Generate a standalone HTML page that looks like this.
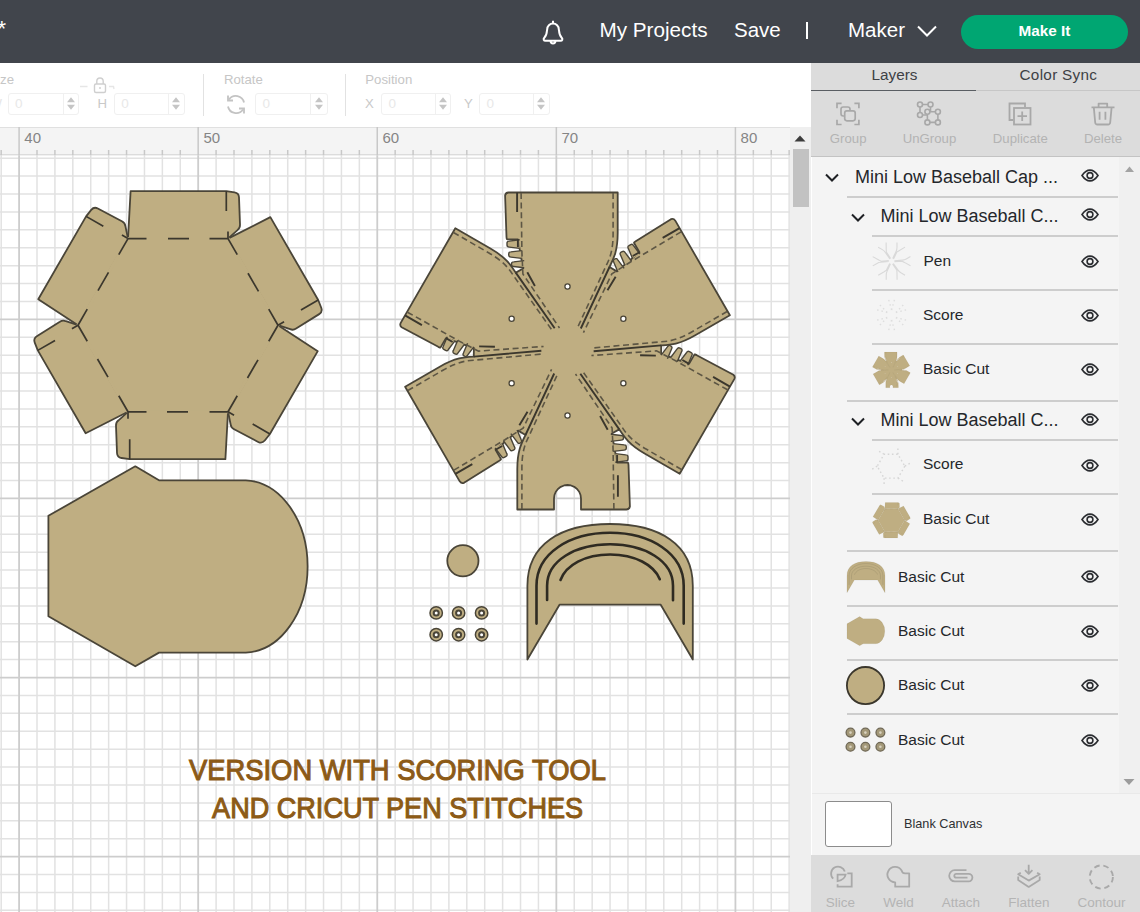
<!DOCTYPE html>
<html><head><meta charset="utf-8">
<style>
*{margin:0;padding:0;box-sizing:border-box}
html,body{width:1140px;height:912px;overflow:hidden;background:#fff;font-family:"Liberation Sans",sans-serif}
.a{position:absolute}
.t{position:absolute;white-space:nowrap;font-family:"Liberation Sans",sans-serif}
</style></head><body>
<svg class="a" style="left:0;top:0" width="790" height="912" viewBox="0 0 790 912" font-family="Liberation Sans, sans-serif">
<path d="M1.19 155V912M37.01 155V912M54.92 155V912M72.82 155V912M90.73 155V912M108.64 155V912M126.55 155V912M144.46 155V912M162.36 155V912M180.27 155V912M216.09 155V912M234 155V912M251.9 155V912M269.81 155V912M287.72 155V912M305.63 155V912M323.54 155V912M341.44 155V912M359.35 155V912M395.17 155V912M413.08 155V912M430.98 155V912M448.89 155V912M466.8 155V912M484.71 155V912M502.62 155V912M520.52 155V912M538.43 155V912M574.25 155V912M592.16 155V912M610.06 155V912M627.97 155V912M645.88 155V912M663.79 155V912M681.7 155V912M699.6 155V912M717.51 155V912M753.33 155V912M771.24 155V912M789.14 155V912M0 158.2H790M0 176.11H790M0 194.02H790M0 211.92H790M0 229.83H790M0 247.74H790M0 265.65H790M0 283.56H790M0 301.46H790M0 337.28H790M0 355.19H790M0 373.1H790M0 391H790M0 408.91H790M0 426.82H790M0 444.73H790M0 462.64H790M0 480.54H790M0 516.36H790M0 534.27H790M0 552.18H790M0 570.08H790M0 587.99H790M0 605.9H790M0 623.81H790M0 641.72H790M0 659.62H790M0 695.44H790M0 713.35H790M0 731.26H790M0 749.16H790M0 767.07H790M0 784.98H790M0 802.89H790M0 820.8H790M0 838.7H790M0 874.52H790M0 892.43H790M0 910.34H790" stroke="#e2e2e2" stroke-width="1.5" fill="none"/>
<path d="M19.1 155V912M198.18 155V912M377.26 155V912M556.34 155V912M735.42 155V912M0 319.37H790M0 498.45H790M0 677.53H790M0 856.61H790" stroke="#cdcdcd" stroke-width="1.8" fill="none"/>
<rect x="0" y="127" width="790" height="28" fill="#f4f4f4"/>
<rect x="0" y="125.5" width="790" height="2" fill="#cbcbcb"/>
<rect x="0" y="154" width="790" height="1.4" fill="#dcdcdc"/>
<path d="M1.19 150V155M19.1 127V155M37.01 150V155M54.92 150V155M72.82 150V155M90.73 150V155M108.64 150V155M126.55 150V155M144.46 150V155M162.36 150V155M180.27 150V155M198.18 127V155M216.09 150V155M234 150V155M251.9 150V155M269.81 150V155M287.72 150V155M305.63 150V155M323.54 150V155M341.44 150V155M359.35 150V155M377.26 127V155M395.17 150V155M413.08 150V155M430.98 150V155M448.89 150V155M466.8 150V155M484.71 150V155M502.62 150V155M520.52 150V155M538.43 150V155M556.34 127V155M574.25 150V155M592.16 150V155M610.06 150V155M627.97 150V155M645.88 150V155M663.79 150V155M681.7 150V155M699.6 150V155M717.51 150V155M735.42 127V155M753.33 150V155M771.24 150V155M789.14 150V155" stroke="#c8c8c8" stroke-width="1.5"/>
<text x="24.3" y="142.7" font-size="15" fill="#858585">40</text>
<text x="203.38" y="142.7" font-size="15" fill="#858585">50</text>
<text x="382.46" y="142.7" font-size="15" fill="#858585">60</text>
<text x="561.54" y="142.7" font-size="15" fill="#858585">70</text>
<text x="740.62" y="142.7" font-size="15" fill="#858585">80</text>
<g fill="#bfae82" stroke="#4a4538" stroke-width="1.8" stroke-linejoin="round">
<path d="M128 238.6L130.6 191.2L226.3 191.2L234.5 192.4Q238.8 193.1 239 197.4L240 224.6Q240.2 228.1 237.5 230.1L228 238.6Z"/>
<path d="M228 238.6L270.35 217.15L318.2 300.03L321.26 307.73Q322.8 311.8 319.18 314.13L296.12 328.59Q293.19 330.52 290.11 329.18L278 325.2Z"/>
<path d="M278 325.2L317.75 351.15L269.9 434.03L264.76 440.53Q262 443.91 258.18 441.93L234.12 429.19Q230.99 427.62 230.61 424.28L228 411.8Z"/>
<path d="M228 411.8L225.4 459.2L129.7 459.2L121.5 458Q117.2 457.3 117 453L116 425.8Q115.8 422.3 118.5 420.3L128 411.8Z"/>
<path d="M128 411.8L85.65 433.25L37.8 350.37L34.74 342.67Q33.2 338.6 36.82 336.27L59.88 321.81Q62.81 319.88 65.89 321.22L78 325.2Z"/>
<path d="M78 325.2L38.25 299.25L86.1 216.37L91.24 209.87Q94 206.49 97.82 208.47L121.88 221.21Q125.01 222.78 125.39 226.12L128 238.6Z"/>
</g>
<path d="M128 238.6L228 238.6L278 325.2L228 411.8L128 411.8L78 325.2Z" fill="#bfae82" stroke="#bfae82" stroke-width="3" stroke-linejoin="round"/>
<path d="M128 238.6L146.5 238.6M168 238.6L189 238.6M209.5 238.6L228 238.6M226.3 191.2L226.3 211.1M228 238.6L228 231.6M228 238.6L237.25 254.62M248 273.24L258.5 291.43M268.75 309.18L278 325.2M318.2 300.03L300.97 309.98M278 325.2L284.06 321.7M278 325.2L268.75 341.22M258 359.84L247.5 378.03M237.25 395.78L228 411.8M269.9 434.03L252.67 424.08M228 411.8L234.06 415.3M228 411.8L209.5 411.8M188 411.8L167 411.8M146.5 411.8L128 411.8M129.7 459.2L129.7 439.3M128 411.8L128 418.8M128 411.8L118.75 395.78M108 377.16L97.5 358.97M87.25 341.22L78 325.2M37.8 350.37L55.03 340.42M78 325.2L71.94 328.7M78 325.2L87.25 309.18M98 290.56L108.5 272.37M118.75 254.62L128 238.6M86.1 216.37L103.33 226.32M128 238.6L121.94 235.1" stroke="#3b372d" stroke-width="1.7" fill="none"/>
<path d="M48.4 515.8L135.3 466.3L159 480.3L245.8 480.3A64 86.2 0 0 1 245.8 652.6L159 652.6L135.3 666.3L48.4 616.3Z" fill="#bfae82" stroke="#4a4538" stroke-width="1.8" stroke-linejoin="round"/>
<circle cx="462.9" cy="560.8" r="15.6" fill="#bfae82" stroke="#4a4538" stroke-width="1.8"/>
<circle cx="436.2" cy="612.9" r="6.2" fill="#bfae82" stroke="#4a4538" stroke-width="1.5"/><circle cx="436.2" cy="612.9" r="2.5" fill="#fff" stroke="#4a4538" stroke-width="2"/>
<circle cx="436.2" cy="634.7" r="6.2" fill="#bfae82" stroke="#4a4538" stroke-width="1.5"/><circle cx="436.2" cy="634.7" r="2.5" fill="#fff" stroke="#4a4538" stroke-width="2"/>
<circle cx="458.6" cy="612.9" r="6.2" fill="#bfae82" stroke="#4a4538" stroke-width="1.5"/><circle cx="458.6" cy="612.9" r="2.5" fill="#fff" stroke="#4a4538" stroke-width="2"/>
<circle cx="458.6" cy="634.7" r="6.2" fill="#bfae82" stroke="#4a4538" stroke-width="1.5"/><circle cx="458.6" cy="634.7" r="2.5" fill="#fff" stroke="#4a4538" stroke-width="2"/>
<circle cx="481.6" cy="612.9" r="6.2" fill="#bfae82" stroke="#4a4538" stroke-width="1.5"/><circle cx="481.6" cy="612.9" r="2.5" fill="#fff" stroke="#4a4538" stroke-width="2"/>
<circle cx="481.6" cy="634.7" r="6.2" fill="#bfae82" stroke="#4a4538" stroke-width="1.5"/><circle cx="481.6" cy="634.7" r="2.5" fill="#fff" stroke="#4a4538" stroke-width="2"/>
<path d="M527.4 659.5L527.4 585.7C527.4 544 561 524 610.1 524C659 524 692.8 544 692.8 585.7L692.8 659.5L660.7 604.7L559.5 604.7Z" fill="#bfae82" stroke="#4a4538" stroke-width="1.8" stroke-linejoin="round"/>
<path d="M536.5 623.6L536.5 585.7C536.5 553 570 532.8 610.1 532.8C650 532.8 683.7 553 683.7 585.7L683.7 623.6M547.1 600L547.1 585.7C547.1 561 575 544.3 610.1 544.3C645 544.3 673 561 673 585.7L673 600.3M560.5 580C566 565 585 554.5 610.1 554.5C635 554.5 654 565 659.8 579.2" stroke="#2f2b22" stroke-width="2.6" fill="none" stroke-linecap="round"/>
<path d="M515.8 272.6L523.2 268.5L517.9 239.3L507.2 239.3Q506.7 239.5 506.5 237L505.1 195.5Q505.5 192.7 508.5 192.5L617.7 192.5L617.7 233C617.7 251 613.5 259 609.5 267L616.8 271.39L639.44 252.2L634.09 242.93Q633.66 242.6 635.73 241.17L670.97 219.21Q673.59 218.16 675.27 220.65L729.87 315.22L694.79 335.47C679.2 344.47 670.17 344.84 661.25 345.37L661.1 353.89L689.04 363.9L694.39 354.63Q694.46 354.1 696.73 355.17L733.37 374.71Q735.59 376.46 734.27 379.15L679.67 473.72L644.59 453.47C629 444.47 624.17 436.84 619.25 429.37L611.8 433.5L617.1 462.7L627.8 462.7Q628.3 462.5 628.5 465L629.9 506.5Q629.5 509.3 626.5 509.5L581 509.5L581 498.5L580.54 495.01L579.19 491.75L577.05 488.95L574.25 486.81L570.99 485.46L567.5 485L564.01 485.46L560.75 486.81L557.95 488.95L555.81 491.75L554.46 495.01L554 498.5L554 509.5L517.3 509.5L517.3 469C517.3 451 521.5 443 525.5 435L518.2 430.61L495.56 449.8L500.91 459.07Q501.34 459.4 499.27 460.83L464.03 482.79Q461.41 483.84 459.73 481.35L405.13 386.78L440.21 366.53C455.8 357.53 464.83 357.16 473.75 356.63L473.9 348.11L445.96 338.1L440.61 347.37Q440.54 347.9 438.27 346.83L401.63 327.29Q399.41 325.54 400.73 322.85L455.33 228.28L490.41 248.53C506 257.53 510.83 265.16 515.75 272.63Z" fill="#bfae82" stroke="#4a4538" stroke-width="1.8" stroke-linejoin="round"/>
<path d="M519.7 239.8L509.2 241.1Q507 241.1 507 243.1L507 245.1Q507 247.1 509.2 247.1L519.7 248.4M521.8 250.6L510.9 251.9Q508.7 251.9 508.7 253.9L508.7 255.1Q508.7 257.1 510.9 257.1L521.8 258.4M524.2 260.6L513.7 261.9Q511.5 261.9 511.5 263.9L511.5 264.5Q511.5 266.5 513.7 266.5L524.2 267.8M639.9 254L633.53 245.56Q632.43 243.66 630.69 244.66L628.96 245.66Q627.23 246.66 628.33 248.56L632.45 258.3M631.6 261.22L625.02 252.43Q623.92 250.53 622.19 251.53L621.15 252.13Q619.42 253.13 620.52 255.03L624.84 265.12M624.14 268.3L617.76 259.86Q616.66 257.95 614.93 258.95L614.41 259.25Q612.68 260.25 613.78 262.16L617.9 271.9M687.7 365.2L691.83 355.46Q692.93 353.56 691.19 352.56L689.46 351.56Q687.73 350.56 686.63 352.46L680.25 360.9M677.3 361.62L681.62 351.53Q682.72 349.63 680.99 348.63L679.95 348.03Q678.22 347.03 677.12 348.93L670.54 357.72M667.44 358.7L671.56 348.96Q672.66 347.05 670.93 346.05L670.41 345.75Q668.68 344.75 667.58 346.66L661.2 355.1M615.3 462.2L625.8 460.9Q628 460.9 628 458.9L628 456.9Q628 454.9 625.8 454.9L615.3 453.6M613.2 451.4L624.1 450.1Q626.3 450.1 626.3 448.1L626.3 446.9Q626.3 444.9 624.1 444.9L613.2 443.6M610.8 441.4L621.3 440.1Q623.5 440.1 623.5 438.1L623.5 437.5Q623.5 435.5 621.3 435.5L610.8 434.2M495.1 448L501.47 456.44Q502.57 458.34 504.31 457.34L506.04 456.34Q507.77 455.34 506.67 453.44L502.55 443.7M503.4 440.78L509.98 449.57Q511.08 451.47 512.81 450.47L513.85 449.87Q515.58 448.87 514.48 446.97L510.16 436.88M510.86 433.7L517.24 442.14Q518.34 444.05 520.07 443.05L520.59 442.75Q522.32 441.75 521.22 439.84L517.1 430.1M447.3 336.8L443.17 346.54Q442.07 348.44 443.81 349.44L445.54 350.44Q447.27 351.44 448.37 349.54L454.75 341.1M457.7 340.38L453.38 350.47Q452.28 352.37 454.01 353.37L455.05 353.97Q456.78 354.97 457.88 353.07L464.46 344.28M467.56 343.3L463.44 353.04Q462.34 354.95 464.07 355.95L464.59 356.25Q466.32 357.25 467.42 355.34L473.8 346.9" fill="#bfae82" stroke="#4a4538" stroke-width="1.4" stroke-linejoin="round"/>
<path d="M580.8 328.5L609.5 267M527.3 272.2L534.9 286M517.1 192.5L517.1 212M517.9 247L517.9 239.3M593.64 351.27L661.25 345.37M615.64 276.79L607.49 290.27M679.57 228.1L662.68 237.85M632.77 256.05L639.44 252.2M580.34 373.77L619.25 429.37M655.84 355.59L640.09 355.27M729.97 386.6L713.08 376.85M682.37 360.05L689.04 363.9M554.2 373.5L525.5 435M607.7 429.8L600.1 416M617.9 496.7L617.9 475.3M617.1 455L617.1 462.7M541.36 350.73L473.75 356.63M519.36 425.21L527.51 411.73M455.43 473.9L472.32 464.15M502.23 445.95L495.56 449.8M554.66 328.23L515.75 272.63M479.16 346.41L494.91 346.73M405.03 315.4L421.92 325.15M452.63 341.95L445.96 338.1" stroke="#3b372d" stroke-width="1.9" fill="none"/>
<path d="M613.1 193L613.1 234C613.1 251 609.5 259 606.1 265.8L576.9 329M521.1 193L521.9 252L522.9 274L559.5 328M727.13 311.49L691.62 331.99C676.9 340.49 668.17 341.37 660.59 341.83L591.25 348.14M681.13 231.82L630.44 262.01L611.88 273.88L583.42 332.57M681.53 469.49L646.02 448.99C631.3 440.49 626.17 433.37 621.99 427.03L581.85 370.14M727.53 389.82L676.04 361.01L656.48 350.88L591.42 355.57M521.9 509L521.9 468C521.9 451 525.5 443 528.9 436.2L558.1 373M613.9 509L613.1 450L612.1 428L575.5 374M407.87 390.51L443.38 370.01C458.1 361.51 466.83 360.63 474.41 360.17L543.75 353.86M453.87 470.18L504.56 439.99L523.12 428.12L551.58 369.43M453.47 232.51L488.98 253.01C503.7 261.51 508.83 268.63 513.01 274.97L553.15 331.86M407.47 312.18L458.96 340.99L478.52 351.12L543.58 346.43" stroke="#5d5644" stroke-width="1.6" stroke-dasharray="6 3.6" fill="none"/>
<circle cx="567.5" cy="286.5" r="2.6" fill="#fff" stroke="#4a4538" stroke-width="1.3"/>
<circle cx="623.36" cy="318.75" r="2.6" fill="#fff" stroke="#4a4538" stroke-width="1.3"/>
<circle cx="623.36" cy="383.25" r="2.6" fill="#fff" stroke="#4a4538" stroke-width="1.3"/>
<circle cx="567.5" cy="415.5" r="2.6" fill="#fff" stroke="#4a4538" stroke-width="1.3"/>
<circle cx="511.64" cy="383.25" r="2.6" fill="#fff" stroke="#4a4538" stroke-width="1.3"/>
<circle cx="511.64" cy="318.75" r="2.6" fill="#fff" stroke="#4a4538" stroke-width="1.3"/>
<text x="397.5" y="779.7" text-anchor="middle" font-size="29.2" fill="#8c5a16" stroke="#8c5a16" stroke-width="1.05" textLength="417" lengthAdjust="spacingAndGlyphs">VERSION WITH SCORING TOOL</text>
<text x="397.6" y="818.3" text-anchor="middle" font-size="29.2" fill="#8c5a16" stroke="#8c5a16" stroke-width="1.05" textLength="371" lengthAdjust="spacingAndGlyphs">AND CRICUT PEN STITCHES</text>
</svg>
<div class="a" style="left:0;top:63px;width:811px;height:63.5px;background:#fff"></div>
<div class="t" style="left:-11.7px;top:73.3px;font-size:13.2px;line-height:1;color:#c6c6c6">Size</div>
<div class="t" style="left:224px;top:73.3px;font-size:13.2px;line-height:1;color:#c6c6c6">Rotate</div>
<div class="t" style="left:365.3px;top:73.3px;font-size:13.2px;line-height:1;color:#c6c6c6">Position</div>
<div class="t" style="left:97.5px;top:96.8px;font-size:13.2px;line-height:1;color:#c9c9c9">H</div>
<div class="t" style="left:365px;top:96.8px;font-size:13.2px;line-height:1;color:#c9c9c9">X</div>
<div class="t" style="left:464px;top:96.8px;font-size:13.2px;line-height:1;color:#c9c9c9">Y</div>
<div class="t" style="left:-10.5px;top:96.8px;font-size:13.2px;line-height:1;color:#e6e6e6">W</div>
<div class="a" style="left:7.5px;top:92.5px;width:71.3px;height:22px;border:1.2px solid #f0f0f0;border-radius:3px;background:#fff"></div>
<div class="a" style="left:62.5px;top:93.5px;width:1.2px;height:20px;background:#f0f0f0"></div>
<div class="t" style="left:15.0px;top:96.5px;font-size:13.5px;line-height:1;color:#e8e8e8">0</div>
<svg class="a" style="left:65.65px;top:96px" width="10" height="15"><path d="M1 6.2L5 1.2L9 6.2Z M1 8.8L5 13.8L9 8.8Z" fill="#c5c5c5"/></svg>
<div class="a" style="left:113.8px;top:92.5px;width:71.2px;height:22px;border:1.2px solid #f0f0f0;border-radius:3px;background:#fff"></div>
<div class="a" style="left:167.5px;top:93.5px;width:1.2px;height:20px;background:#f0f0f0"></div>
<div class="t" style="left:121.3px;top:96.5px;font-size:13.5px;line-height:1;color:#e8e8e8">0</div>
<svg class="a" style="left:171.25px;top:96px" width="10" height="15"><path d="M1 6.2L5 1.2L9 6.2Z M1 8.8L5 13.8L9 8.8Z" fill="#c5c5c5"/></svg>
<div class="a" style="left:255px;top:92.5px;width:73px;height:22px;border:1.2px solid #f0f0f0;border-radius:3px;background:#fff"></div>
<div class="a" style="left:309.5px;top:93.5px;width:1.2px;height:20px;background:#f0f0f0"></div>
<div class="t" style="left:262.5px;top:96.5px;font-size:13.5px;line-height:1;color:#e8e8e8">0</div>
<svg class="a" style="left:313.75px;top:96px" width="10" height="15"><path d="M1 6.2L5 1.2L9 6.2Z M1 8.8L5 13.8L9 8.8Z" fill="#c5c5c5"/></svg>
<div class="a" style="left:381px;top:92.5px;width:70.39999999999998px;height:22px;border:1.2px solid #f0f0f0;border-radius:3px;background:#fff"></div>
<div class="a" style="left:434.5px;top:93.5px;width:1.2px;height:20px;background:#f0f0f0"></div>
<div class="t" style="left:388.5px;top:96.5px;font-size:13.5px;line-height:1;color:#e8e8e8">0</div>
<svg class="a" style="left:437.95px;top:96px" width="10" height="15"><path d="M1 6.2L5 1.2L9 6.2Z M1 8.8L5 13.8L9 8.8Z" fill="#c5c5c5"/></svg>
<div class="a" style="left:479px;top:92.5px;width:70.70000000000005px;height:22px;border:1.2px solid #f0f0f0;border-radius:3px;background:#fff"></div>
<div class="a" style="left:533px;top:93.5px;width:1.2px;height:20px;background:#f0f0f0"></div>
<div class="t" style="left:486.5px;top:96.5px;font-size:13.5px;line-height:1;color:#e8e8e8">0</div>
<svg class="a" style="left:536.35px;top:96px" width="10" height="15"><path d="M1 6.2L5 1.2L9 6.2Z M1 8.8L5 13.8L9 8.8Z" fill="#c5c5c5"/></svg>
<div class="a" style="left:203.2px;top:74px;width:1.3px;height:42px;background:#e2e2e2"></div>
<div class="a" style="left:344.8px;top:74px;width:1.3px;height:42px;background:#e2e2e2"></div>
<svg class="a" style="left:78px;top:75px" width="40" height="20" fill="none" stroke="#cfcfcf" stroke-width="1.4"><path d="M2 11.5H9.5M31 11.5H35.5L36 14" stroke="#e6e6e6"/><rect x="16.5" y="9" width="11" height="8.5" rx="1.5"/><path d="M18.8 9V6.2A3.2 3.2 0 0 1 25.2 6.2V9"/><path d="M22 12V14"/></svg>
<svg class="a" style="left:224px;top:93px" width="23" height="23" fill="none" stroke="#c3c3c3" stroke-width="1.8"><g transform="translate(23.5 0) scale(-1 1)"><path d="M3.5 9.5A8.3 8.3 0 0 1 18.5 6.5"/><path d="M19.5 2.5V7.5H14.5"/><path d="M19.5 13.5A8.3 8.3 0 0 1 4.5 16.5"/><path d="M3.5 20.5V15.5H8.5"/></g></svg>
<div class="a" style="left:789.6px;top:127px;width:21.8px;height:785px;background:#efefef"></div>
<svg class="a" style="left:793px;top:133px" width="14" height="10"><path d="M1.5 8.5L7 2.5L12.5 8.5Z" fill="#3c3c3c"/></svg>
<div class="a" style="left:792.5px;top:149px;width:16.5px;height:58px;background:#c2c2c2"></div>
<div class="a" style="left:0;top:0;width:1140px;height:63px;background:#41454c"></div>
<div class="t" style="left:-2.5px;top:18.4px;font-size:22px;line-height:1;color:#ffffff;">*</div>
<div class="t" style="left:599.5px;top:19.9px;font-size:20.7px;line-height:1;color:#ffffff;">My Projects</div>
<div class="t" style="left:734px;top:20.0px;font-size:20.5px;line-height:1;color:#ffffff;">Save</div>
<div class="a" style="left:805.5px;top:22px;width:2px;height:17px;background:#fff"></div>
<div class="t" style="left:848px;top:20.0px;font-size:20.5px;line-height:1;color:#ffffff;">Maker</div>
<svg class="a" style="left:916px;top:24px" width="22" height="14" fill="none" stroke="#fff" stroke-width="2"><path d="M2 2.5L11 11.5L20 2.5"/></svg>
<svg class="a" style="left:538px;top:17px" width="30" height="30" fill="none" stroke="#fff" stroke-width="2" stroke-linejoin="round"><path d="M15 3.8V6.5M6.3 20.8C8.3 18.8 8.8 16.5 9 13.5L9.2 12.3A5.8 5.8 0 0 1 20.8 12.3L21 13.5C21.2 16.5 21.7 18.8 23.7 20.8C25 22.2 24.3 23.8 22.5 23.8H7.5C5.7 23.8 5 22.2 6.3 20.8Z"/><path d="M12.6 24A2.4 2.4 0 0 0 17.4 24"/></svg>
<div class="a" style="left:961px;top:15px;width:167px;height:34px;border-radius:17px;background:#00a672"></div>
<div class="t" style="left:1018.5px;top:22.6px;font-size:15.3px;line-height:1;color:#ffffff;font-weight:bold">Make It</div>
<div class="a" style="left:811.5px;top:63px;width:328.5px;height:849px;background:#f4f4f4"></div>
<div class="a" style="left:811px;top:63px;width:329px;height:93px;background:#dcdcdc"></div>
<div class="a" style="left:811px;top:89.5px;width:165px;height:1.6px;background:#5a5e63"></div>
<div class="a" style="left:976px;top:89.5px;width:164px;height:1px;background:#c7c7c7"></div>
<div class="a" style="left:811px;top:155.5px;width:329px;height:1.6px;background:#c3c3c3"></div>
<div class="t" style="left:871.5px;top:66px;font-size:15.3px;color:#3e4145">Layers</div>
<div class="t" style="left:1019.5px;top:66px;font-size:15.3px;color:#3e4145;letter-spacing:0.3px">Color Sync</div>
<div class="t" style="left:848.2px;top:131px;width:100px;margin-left:-50px;text-align:center;font-size:13.2px;color:#b3b3b3">Group</div>
<div class="t" style="left:929.5px;top:131px;width:100px;margin-left:-50px;text-align:center;font-size:13.2px;color:#b3b3b3">UnGroup</div>
<div class="t" style="left:1020.3px;top:131px;width:100px;margin-left:-50px;text-align:center;font-size:13.2px;color:#b3b3b3">Duplicate</div>
<div class="t" style="left:1103px;top:131px;width:100px;margin-left:-50px;text-align:center;font-size:13.2px;color:#b3b3b3">Delete</div>
<svg class="a" style="left:836px;top:102px" width="24" height="24" fill="none" stroke="#a8a8a8" stroke-width="1.7"><path d="M1 6.2V1.4H5.6M18.4 1.4H22.9V6.2M22.9 17.8V22.5H18.4M5.6 22.5H1V17.8"/><rect x="5" y="5" width="9" height="9" rx="2.2"/><rect x="8.7" y="8.8" width="10.5" height="10" rx="2.2" fill="#dcdcdc"/></svg>
<svg class="a" style="left:916px;top:100px" width="26" height="26" fill="none" stroke="#a8a8a8" stroke-width="1.6"><path d="M4 4.5H14.5V11M4 4.5V15H11"/><circle cx="4" cy="4.5" r="2.5" fill="#dcdcdc"/><circle cx="14.5" cy="4.5" r="2.5" fill="#dcdcdc"/><circle cx="4" cy="15" r="2.5" fill="#dcdcdc"/><path d="M11.4 11.8H21.9V22.4H11.4Z"/><circle cx="11.4" cy="11.8" r="2.5" fill="#dcdcdc"/><circle cx="21.9" cy="11.8" r="2.5" fill="#dcdcdc"/><circle cx="11.4" cy="22.4" r="2.5" fill="#dcdcdc"/><circle cx="21.9" cy="22.4" r="2.5" fill="#dcdcdc"/></svg>
<svg class="a" style="left:1008px;top:102px" width="25" height="24" fill="none" stroke="#a8a8a8" stroke-width="1.8"><path d="M5 18H1.5V1.5H17V5"/><rect x="6" y="6" width="16.5" height="16.5"/><path d="M14.2 9.5V19M9.5 14.2H19"/></svg>
<svg class="a" style="left:1091px;top:101px" width="24" height="25" fill="none" stroke="#a8a8a8" stroke-width="1.8" stroke-linejoin="round"><path d="M0.5 6.4H23.5M7.6 6.4V2.6H16.2V6.4M2.8 6.4L4.2 21.5Q4.4 23.5 6.4 23.5H17Q19 23.5 19.2 21.5L20.6 6.4M8.6 10.8V18.8M14.4 10.8V18.8"/></svg>
<div class="a" style="left:1118.5px;top:157px;width:21.5px;height:636px;background:#f0f0f0"></div>
<svg class="a" style="left:1122px;top:164px" width="14" height="10"><path d="M3 8L7.5 2.6L12 8Z" fill="#a3a3a3"/></svg>
<svg class="a" style="left:1122px;top:777px" width="14" height="10"><path d="M1.5 2L7 8L12.5 2Z" fill="#9c9c9c"/></svg>
<svg class="a" style="left:825px;top:173px" width="14" height="9" fill="none" stroke="#1e2024" stroke-width="2"><path d="M1 1.5L7 7.5L13 1.5"/></svg>
<div class="t" style="left:855px;top:167.8px;font-size:18px;line-height:1;color:#24272b">Mini Low Baseball Cap ...</div>
<svg class="a" style="left:1081px;top:169.0px" width="18" height="13" fill="none" stroke="#2a2c30" stroke-width="1.6"><path d="M1 6.5C3.8 2.4 6.5 1.1 9 1.1S14.2 2.4 17 6.5C14.2 10.6 11.5 11.9 9 11.9S3.8 10.6 1 6.5Z"/><circle cx="9" cy="6.5" r="2.9"/></svg>
<div class="a" style="left:847px;top:196px;width:271px;height:2px;background:#cdcdcd"></div>
<svg class="a" style="left:851px;top:213px" width="14" height="9" fill="none" stroke="#1e2024" stroke-width="2"><path d="M1 1.5L7 7.5L13 1.5"/></svg>
<div class="t" style="left:880.5px;top:206.6px;font-size:18px;line-height:1;color:#24272b">Mini Low Baseball C...</div>
<svg class="a" style="left:1081px;top:207.5px" width="18" height="13" fill="none" stroke="#2a2c30" stroke-width="1.6"><path d="M1 6.5C3.8 2.4 6.5 1.1 9 1.1S14.2 2.4 17 6.5C14.2 10.6 11.5 11.9 9 11.9S3.8 10.6 1 6.5Z"/><circle cx="9" cy="6.5" r="2.9"/></svg>
<div class="a" style="left:872px;top:235px;width:246px;height:2px;background:#cdcdcd"></div>
<div class="t" style="left:923.5px;top:253.2px;font-size:15.5px;line-height:1;color:#24272b">Pen</div>
<svg class="a" style="left:1081px;top:254.5px" width="18" height="13" fill="none" stroke="#2a2c30" stroke-width="1.6"><path d="M1 6.5C3.8 2.4 6.5 1.1 9 1.1S14.2 2.4 17 6.5C14.2 10.6 11.5 11.9 9 11.9S3.8 10.6 1 6.5Z"/><circle cx="9" cy="6.5" r="2.9"/></svg>
<div class="a" style="left:872px;top:289px;width:246px;height:2px;background:#cdcdcd"></div>
<div class="t" style="left:923px;top:307.4px;font-size:15.5px;line-height:1;color:#24272b">Score</div>
<svg class="a" style="left:1081px;top:309.0px" width="18" height="13" fill="none" stroke="#2a2c30" stroke-width="1.6"><path d="M1 6.5C3.8 2.4 6.5 1.1 9 1.1S14.2 2.4 17 6.5C14.2 10.6 11.5 11.9 9 11.9S3.8 10.6 1 6.5Z"/><circle cx="9" cy="6.5" r="2.9"/></svg>
<div class="a" style="left:872px;top:343px;width:246px;height:2px;background:#cdcdcd"></div>
<div class="t" style="left:923px;top:360.9px;font-size:15.5px;line-height:1;color:#24272b">Basic Cut</div>
<svg class="a" style="left:1081px;top:363.0px" width="18" height="13" fill="none" stroke="#2a2c30" stroke-width="1.6"><path d="M1 6.5C3.8 2.4 6.5 1.1 9 1.1S14.2 2.4 17 6.5C14.2 10.6 11.5 11.9 9 11.9S3.8 10.6 1 6.5Z"/><circle cx="9" cy="6.5" r="2.9"/></svg>
<div class="a" style="left:847px;top:400px;width:271px;height:2px;background:#cdcdcd"></div>
<svg class="a" style="left:851px;top:417px" width="14" height="9" fill="none" stroke="#1e2024" stroke-width="2"><path d="M1 1.5L7 7.5L13 1.5"/></svg>
<div class="t" style="left:880.5px;top:410.8px;font-size:18px;line-height:1;color:#24272b">Mini Low Baseball C...</div>
<svg class="a" style="left:1081px;top:412.5px" width="18" height="13" fill="none" stroke="#2a2c30" stroke-width="1.6"><path d="M1 6.5C3.8 2.4 6.5 1.1 9 1.1S14.2 2.4 17 6.5C14.2 10.6 11.5 11.9 9 11.9S3.8 10.6 1 6.5Z"/><circle cx="9" cy="6.5" r="2.9"/></svg>
<div class="a" style="left:872px;top:439px;width:246px;height:2px;background:#cdcdcd"></div>
<div class="t" style="left:923px;top:456.1px;font-size:15.5px;line-height:1;color:#24272b">Score</div>
<svg class="a" style="left:1081px;top:458.5px" width="18" height="13" fill="none" stroke="#2a2c30" stroke-width="1.6"><path d="M1 6.5C3.8 2.4 6.5 1.1 9 1.1S14.2 2.4 17 6.5C14.2 10.6 11.5 11.9 9 11.9S3.8 10.6 1 6.5Z"/><circle cx="9" cy="6.5" r="2.9"/></svg>
<div class="a" style="left:872px;top:493px;width:246px;height:2px;background:#cdcdcd"></div>
<div class="t" style="left:923px;top:511.2px;font-size:15.5px;line-height:1;color:#24272b">Basic Cut</div>
<svg class="a" style="left:1081px;top:513.0px" width="18" height="13" fill="none" stroke="#2a2c30" stroke-width="1.6"><path d="M1 6.5C3.8 2.4 6.5 1.1 9 1.1S14.2 2.4 17 6.5C14.2 10.6 11.5 11.9 9 11.9S3.8 10.6 1 6.5Z"/><circle cx="9" cy="6.5" r="2.9"/></svg>
<div class="a" style="left:847px;top:550px;width:271px;height:2px;background:#cdcdcd"></div>
<div class="t" style="left:898px;top:568.5px;font-size:15.5px;line-height:1;color:#24272b">Basic Cut</div>
<svg class="a" style="left:1081px;top:570.0px" width="18" height="13" fill="none" stroke="#2a2c30" stroke-width="1.6"><path d="M1 6.5C3.8 2.4 6.5 1.1 9 1.1S14.2 2.4 17 6.5C14.2 10.6 11.5 11.9 9 11.9S3.8 10.6 1 6.5Z"/><circle cx="9" cy="6.5" r="2.9"/></svg>
<div class="a" style="left:847px;top:605px;width:271px;height:2px;background:#cdcdcd"></div>
<div class="t" style="left:898px;top:622.9px;font-size:15.5px;line-height:1;color:#24272b">Basic Cut</div>
<svg class="a" style="left:1081px;top:624.5px" width="18" height="13" fill="none" stroke="#2a2c30" stroke-width="1.6"><path d="M1 6.5C3.8 2.4 6.5 1.1 9 1.1S14.2 2.4 17 6.5C14.2 10.6 11.5 11.9 9 11.9S3.8 10.6 1 6.5Z"/><circle cx="9" cy="6.5" r="2.9"/></svg>
<div class="a" style="left:847px;top:659px;width:271px;height:2px;background:#cdcdcd"></div>
<div class="t" style="left:898px;top:677.4px;font-size:15.5px;line-height:1;color:#24272b">Basic Cut</div>
<svg class="a" style="left:1081px;top:679.2px" width="18" height="13" fill="none" stroke="#2a2c30" stroke-width="1.6"><path d="M1 6.5C3.8 2.4 6.5 1.1 9 1.1S14.2 2.4 17 6.5C14.2 10.6 11.5 11.9 9 11.9S3.8 10.6 1 6.5Z"/><circle cx="9" cy="6.5" r="2.9"/></svg>
<div class="a" style="left:847px;top:713px;width:271px;height:2px;background:#cdcdcd"></div>
<div class="t" style="left:898px;top:731.9px;font-size:15.5px;line-height:1;color:#24272b">Basic Cut</div>
<svg class="a" style="left:1081px;top:733.5px" width="18" height="13" fill="none" stroke="#2a2c30" stroke-width="1.6"><path d="M1 6.5C3.8 2.4 6.5 1.1 9 1.1S14.2 2.4 17 6.5C14.2 10.6 11.5 11.9 9 11.9S3.8 10.6 1 6.5Z"/><circle cx="9" cy="6.5" r="2.9"/></svg>
<div class="a" style="left:811.5px;top:793px;width:328.5px;height:62px;background:#f4f4f4;border-top:1px solid #e9e9e9"></div>
<div class="a" style="left:824.5px;top:801px;width:67px;height:46px;background:#fff;border:1.3px solid #8c8c8c;border-radius:3px"></div>
<div class="t" style="left:904px;top:817.7px;font-size:12.7px;line-height:1;color:#2e3033">Blank Canvas</div>
<div class="a" style="left:811px;top:854.5px;width:329px;height:58px;background:#dcdcdc"></div>
<div class="t" style="left:840.5px;top:894.5px;width:100px;margin-left:-50px;text-align:center;font-size:13.5px;color:#b4b4b4">Slice</div>
<div class="t" style="left:898.5px;top:894.5px;width:100px;margin-left:-50px;text-align:center;font-size:13.5px;color:#b4b4b4">Weld</div>
<div class="t" style="left:961px;top:894.5px;width:100px;margin-left:-50px;text-align:center;font-size:13.5px;color:#b4b4b4">Attach</div>
<div class="t" style="left:1028.8px;top:894.5px;width:100px;margin-left:-50px;text-align:center;font-size:13.5px;color:#b4b4b4">Flatten</div>
<div class="t" style="left:1101.5px;top:894.5px;width:100px;margin-left:-50px;text-align:center;font-size:13.5px;color:#b4b4b4">Contour</div>
<svg class="a" style="left:828px;top:864px" width="26" height="26" fill="none" stroke="#a9a9a9" stroke-width="1.8"><path d="M5.2 14.6A7 7 0 1 1 16.8 7.6"/><path d="M9.6 10.7H17.6Q16.6 15.8 9.6 17.2Z"/><path d="M19.3 9.3H23.7V22.7H9.6V20.3"/></svg>
<svg class="a" style="left:886px;top:864px" width="26" height="26" fill="none" stroke="#a9a9a9" stroke-width="1.8" stroke-linejoin="round"><path d="M9.2 22.7V18.3A7.7 7.7 0 1 1 15.6 6.4Q16.4 9.3 19 9.3H23.2V22.7Z"/></svg>
<svg class="a" style="left:947px;top:868px" width="28" height="18" fill="none" stroke="#a9a9a9" stroke-width="1.8"><path d="M19.5 2.2H7.8A5.6 5.6 0 0 0 7.8 13.4H21.6A3.8 3.8 0 0 0 21.6 5.8H9.2A1.9 1.9 0 0 0 9.2 9.6H20.5"/></svg>
<svg class="a" style="left:1015px;top:862px" width="28" height="28" fill="none" stroke="#a9a9a9" stroke-width="1.8" stroke-linejoin="round"><path d="M13.7 2.8V11.8M10 8.1L13.7 11.8L17.4 8.1"/><path d="M5.8 10.7L3.2 12.3L13.7 18.6L24.7 12.3L22.1 10.7"/><path d="M3.2 14.6V18.1L13.7 24.9L24.7 18.1V14.6"/></svg>
<svg class="a" style="left:1088px;top:864px" width="28" height="28" fill="none" stroke="#a9a9a9" stroke-width="1.9" stroke-dasharray="5.6 3.8"><circle cx="13.3" cy="13" r="11.6"/></svg>
<svg class="a" style="left:0;top:0" width="1140" height="912" viewBox="0 0 1140 912"><style>.th path,.th circle{stroke-opacity:.18}</style><g class="th" transform="translate(891.4 369.9) scale(0.113) translate(-567.5 -351)"><path d="M515.8 272.6L523.2 268.5L517.9 239.3L507.2 239.3Q506.7 239.5 506.5 237L505.1 195.5Q505.5 192.7 508.5 192.5L617.7 192.5L617.7 233C617.7 251 613.5 259 609.5 267L616.8 271.39L639.44 252.2L634.09 242.93Q633.66 242.6 635.73 241.17L670.97 219.21Q673.59 218.16 675.27 220.65L729.87 315.22L694.79 335.47C679.2 344.47 670.17 344.84 661.25 345.37L661.1 353.89L689.04 363.9L694.39 354.63Q694.46 354.1 696.73 355.17L733.37 374.71Q735.59 376.46 734.27 379.15L679.67 473.72L644.59 453.47C629 444.47 624.17 436.84 619.25 429.37L611.8 433.5L617.1 462.7L627.8 462.7Q628.3 462.5 628.5 465L629.9 506.5Q629.5 509.3 626.5 509.5L581 509.5L581 498.5L580.54 495.01L579.19 491.75L577.05 488.95L574.25 486.81L570.99 485.46L567.5 485L564.01 485.46L560.75 486.81L557.95 488.95L555.81 491.75L554.46 495.01L554 498.5L554 509.5L517.3 509.5L517.3 469C517.3 451 521.5 443 525.5 435L518.2 430.61L495.56 449.8L500.91 459.07Q501.34 459.4 499.27 460.83L464.03 482.79Q461.41 483.84 459.73 481.35L405.13 386.78L440.21 366.53C455.8 357.53 464.83 357.16 473.75 356.63L473.9 348.11L445.96 338.1L440.61 347.37Q440.54 347.9 438.27 346.83L401.63 327.29Q399.41 325.54 400.73 322.85L455.33 228.28L490.41 248.53C506 257.53 510.83 265.16 515.75 272.63Z" fill="#bfae82" stroke="#4a4538" stroke-width="1.8" stroke-linejoin="round"/>
<path d="M519.7 239.8L509.2 241.1Q507 241.1 507 243.1L507 245.1Q507 247.1 509.2 247.1L519.7 248.4M521.8 250.6L510.9 251.9Q508.7 251.9 508.7 253.9L508.7 255.1Q508.7 257.1 510.9 257.1L521.8 258.4M524.2 260.6L513.7 261.9Q511.5 261.9 511.5 263.9L511.5 264.5Q511.5 266.5 513.7 266.5L524.2 267.8M639.9 254L633.53 245.56Q632.43 243.66 630.69 244.66L628.96 245.66Q627.23 246.66 628.33 248.56L632.45 258.3M631.6 261.22L625.02 252.43Q623.92 250.53 622.19 251.53L621.15 252.13Q619.42 253.13 620.52 255.03L624.84 265.12M624.14 268.3L617.76 259.86Q616.66 257.95 614.93 258.95L614.41 259.25Q612.68 260.25 613.78 262.16L617.9 271.9M687.7 365.2L691.83 355.46Q692.93 353.56 691.19 352.56L689.46 351.56Q687.73 350.56 686.63 352.46L680.25 360.9M677.3 361.62L681.62 351.53Q682.72 349.63 680.99 348.63L679.95 348.03Q678.22 347.03 677.12 348.93L670.54 357.72M667.44 358.7L671.56 348.96Q672.66 347.05 670.93 346.05L670.41 345.75Q668.68 344.75 667.58 346.66L661.2 355.1M615.3 462.2L625.8 460.9Q628 460.9 628 458.9L628 456.9Q628 454.9 625.8 454.9L615.3 453.6M613.2 451.4L624.1 450.1Q626.3 450.1 626.3 448.1L626.3 446.9Q626.3 444.9 624.1 444.9L613.2 443.6M610.8 441.4L621.3 440.1Q623.5 440.1 623.5 438.1L623.5 437.5Q623.5 435.5 621.3 435.5L610.8 434.2M495.1 448L501.47 456.44Q502.57 458.34 504.31 457.34L506.04 456.34Q507.77 455.34 506.67 453.44L502.55 443.7M503.4 440.78L509.98 449.57Q511.08 451.47 512.81 450.47L513.85 449.87Q515.58 448.87 514.48 446.97L510.16 436.88M510.86 433.7L517.24 442.14Q518.34 444.05 520.07 443.05L520.59 442.75Q522.32 441.75 521.22 439.84L517.1 430.1M447.3 336.8L443.17 346.54Q442.07 348.44 443.81 349.44L445.54 350.44Q447.27 351.44 448.37 349.54L454.75 341.1M457.7 340.38L453.38 350.47Q452.28 352.37 454.01 353.37L455.05 353.97Q456.78 354.97 457.88 353.07L464.46 344.28M467.56 343.3L463.44 353.04Q462.34 354.95 464.07 355.95L464.59 356.25Q466.32 357.25 467.42 355.34L473.8 346.9" fill="#bfae82" stroke="#4a4538" stroke-width="1.4" stroke-linejoin="round"/>
<path d="M580.8 328.5L609.5 267M527.3 272.2L534.9 286M517.1 192.5L517.1 212M517.9 247L517.9 239.3M593.64 351.27L661.25 345.37M615.64 276.79L607.49 290.27M679.57 228.1L662.68 237.85M632.77 256.05L639.44 252.2M580.34 373.77L619.25 429.37M655.84 355.59L640.09 355.27M729.97 386.6L713.08 376.85M682.37 360.05L689.04 363.9M554.2 373.5L525.5 435M607.7 429.8L600.1 416M617.9 496.7L617.9 475.3M617.1 455L617.1 462.7M541.36 350.73L473.75 356.63M519.36 425.21L527.51 411.73M455.43 473.9L472.32 464.15M502.23 445.95L495.56 449.8M554.66 328.23L515.75 272.63M479.16 346.41L494.91 346.73M405.03 315.4L421.92 325.15M452.63 341.95L445.96 338.1" stroke="#3b372d" stroke-width="1.9" fill="none"/>
<path d="M613.1 193L613.1 234C613.1 251 609.5 259 606.1 265.8L576.9 329M521.1 193L521.9 252L522.9 274L559.5 328M727.13 311.49L691.62 331.99C676.9 340.49 668.17 341.37 660.59 341.83L591.25 348.14M681.13 231.82L630.44 262.01L611.88 273.88L583.42 332.57M681.53 469.49L646.02 448.99C631.3 440.49 626.17 433.37 621.99 427.03L581.85 370.14M727.53 389.82L676.04 361.01L656.48 350.88L591.42 355.57M521.9 509L521.9 468C521.9 451 525.5 443 528.9 436.2L558.1 373M613.9 509L613.1 450L612.1 428L575.5 374M407.87 390.51L443.38 370.01C458.1 361.51 466.83 360.63 474.41 360.17L543.75 353.86M453.87 470.18L504.56 439.99L523.12 428.12L551.58 369.43M453.47 232.51L488.98 253.01C503.7 261.51 508.83 268.63 513.01 274.97L553.15 331.86M407.47 312.18L458.96 340.99L478.52 351.12L543.58 346.43" stroke="#5d5644" stroke-width="1.6" stroke-dasharray="6 3.6" fill="none"/>
<circle cx="567.5" cy="286.5" r="2.6" fill="#fff" stroke="#4a4538" stroke-width="1.3"/>
<circle cx="623.36" cy="318.75" r="2.6" fill="#fff" stroke="#4a4538" stroke-width="1.3"/>
<circle cx="623.36" cy="383.25" r="2.6" fill="#fff" stroke="#4a4538" stroke-width="1.3"/>
<circle cx="567.5" cy="415.5" r="2.6" fill="#fff" stroke="#4a4538" stroke-width="1.3"/>
<circle cx="511.64" cy="383.25" r="2.6" fill="#fff" stroke="#4a4538" stroke-width="1.3"/>
<circle cx="511.64" cy="318.75" r="2.6" fill="#fff" stroke="#4a4538" stroke-width="1.3"/></g><g class="th" transform="translate(891.4 520.2) scale(0.132) translate(-178 -324.6)"><g fill="#bfae82" stroke="#4a4538" stroke-width="1.8" stroke-linejoin="round">
<path d="M128 238.6L130.6 191.2L226.3 191.2L234.5 192.4Q238.8 193.1 239 197.4L240 224.6Q240.2 228.1 237.5 230.1L228 238.6Z"/>
<path d="M228 238.6L270.35 217.15L318.2 300.03L321.26 307.73Q322.8 311.8 319.18 314.13L296.12 328.59Q293.19 330.52 290.11 329.18L278 325.2Z"/>
<path d="M278 325.2L317.75 351.15L269.9 434.03L264.76 440.53Q262 443.91 258.18 441.93L234.12 429.19Q230.99 427.62 230.61 424.28L228 411.8Z"/>
<path d="M228 411.8L225.4 459.2L129.7 459.2L121.5 458Q117.2 457.3 117 453L116 425.8Q115.8 422.3 118.5 420.3L128 411.8Z"/>
<path d="M128 411.8L85.65 433.25L37.8 350.37L34.74 342.67Q33.2 338.6 36.82 336.27L59.88 321.81Q62.81 319.88 65.89 321.22L78 325.2Z"/>
<path d="M78 325.2L38.25 299.25L86.1 216.37L91.24 209.87Q94 206.49 97.82 208.47L121.88 221.21Q125.01 222.78 125.39 226.12L128 238.6Z"/>
</g>
<path d="M128 238.6L228 238.6L278 325.2L228 411.8L128 411.8L78 325.2Z" fill="#bfae82" stroke="#bfae82" stroke-width="3" stroke-linejoin="round"/>
<path d="M128 238.6L146.5 238.6M168 238.6L189 238.6M209.5 238.6L228 238.6M226.3 191.2L226.3 211.1M228 238.6L228 231.6M228 238.6L237.25 254.62M248 273.24L258.5 291.43M268.75 309.18L278 325.2M318.2 300.03L300.97 309.98M278 325.2L284.06 321.7M278 325.2L268.75 341.22M258 359.84L247.5 378.03M237.25 395.78L228 411.8M269.9 434.03L252.67 424.08M228 411.8L234.06 415.3M228 411.8L209.5 411.8M188 411.8L167 411.8M146.5 411.8L128 411.8M129.7 459.2L129.7 439.3M128 411.8L128 418.8M128 411.8L118.75 395.78M108 377.16L97.5 358.97M87.25 341.22L78 325.2M37.8 350.37L55.03 340.42M78 325.2L71.94 328.7M78 325.2L87.25 309.18M98 290.56L108.5 272.37M118.75 254.62L128 238.6M86.1 216.37L103.33 226.32M128 238.6L121.94 235.1" stroke="#3b372d" stroke-width="1.7" fill="none"/></g><g class="th" transform="translate(866 577.1) scale(0.23) translate(-610.1 -591.75)"><path d="M527.4 659.5L527.4 585.7C527.4 544 561 524 610.1 524C659 524 692.8 544 692.8 585.7L692.8 659.5L660.7 604.7L559.5 604.7Z" fill="#bfae82" stroke="#4a4538" stroke-width="1.8" stroke-linejoin="round"/>
<path d="M536.5 623.6L536.5 585.7C536.5 553 570 532.8 610.1 532.8C650 532.8 683.7 553 683.7 585.7L683.7 623.6M547.1 600L547.1 585.7C547.1 561 575 544.3 610.1 544.3C645 544.3 673 561 673 585.7L673 600.3M560.5 580C566 565 585 554.5 610.1 554.5C635 554.5 654 565 659.8 579.2" stroke="#2f2b22" stroke-width="2.6" fill="none" stroke-linecap="round"/></g><g class="th" transform="translate(866 631.2) scale(0.146) translate(-178.7 -566.3)"><path d="M48.4 515.8L135.3 466.3L159 480.3L245.8 480.3A64 86.2 0 0 1 245.8 652.6L159 652.6L135.3 666.3L48.4 616.3Z" fill="#bfae82" stroke="#4a4538" stroke-width="1.8" stroke-linejoin="round"/></g><circle cx="865.5" cy="685.6" r="18.6" fill="#bfae82" stroke="#3a362c" stroke-width="1.8"/><circle cx="850.5" cy="732.6" r="4.4" fill="#a39878" stroke="#6f6856" stroke-width="1.3"/><circle cx="850.5" cy="732.6" r="1.3" fill="#d9d2bf"/><circle cx="850.5" cy="746.8" r="4.4" fill="#a39878" stroke="#6f6856" stroke-width="1.3"/><circle cx="850.5" cy="746.8" r="1.3" fill="#d9d2bf"/><circle cx="865.4" cy="732.6" r="4.4" fill="#a39878" stroke="#6f6856" stroke-width="1.3"/><circle cx="865.4" cy="732.6" r="1.3" fill="#d9d2bf"/><circle cx="865.4" cy="746.8" r="4.4" fill="#a39878" stroke="#6f6856" stroke-width="1.3"/><circle cx="865.4" cy="746.8" r="1.3" fill="#d9d2bf"/><circle cx="880.4" cy="732.6" r="4.4" fill="#a39878" stroke="#6f6856" stroke-width="1.3"/><circle cx="880.4" cy="732.6" r="1.3" fill="#d9d2bf"/><circle cx="880.4" cy="746.8" r="4.4" fill="#a39878" stroke="#6f6856" stroke-width="1.3"/><circle cx="880.4" cy="746.8" r="1.3" fill="#d9d2bf"/><g transform="translate(891.6 261.2) scale(0.118) translate(-567.5 -351)"><path d="M613.1 193L613.1 234C613.1 251 609.5 259 606.1 265.8L576.9 329M521.1 193L521.9 252L522.9 274L559.5 328M727.13 311.49L691.62 331.99C676.9 340.49 668.17 341.37 660.59 341.83L591.25 348.14M681.13 231.82L630.44 262.01L611.88 273.88L583.42 332.57M681.53 469.49L646.02 448.99C631.3 440.49 626.17 433.37 621.99 427.03L581.85 370.14M727.53 389.82L676.04 361.01L656.48 350.88L591.42 355.57M521.9 509L521.9 468C521.9 451 525.5 443 528.9 436.2L558.1 373M613.9 509L613.1 450L612.1 428L575.5 374M407.87 390.51L443.38 370.01C458.1 361.51 466.83 360.63 474.41 360.17L543.75 353.86M453.87 470.18L504.56 439.99L523.12 428.12L551.58 369.43M453.47 232.51L488.98 253.01C503.7 261.51 508.83 268.63 513.01 274.97L553.15 331.86M407.47 312.18L458.96 340.99L478.52 351.12L543.58 346.43" stroke="#d9d9d9" stroke-width="9.5" fill="none"/></g><path d="M891.60 310.00L888.02 297.36M891.60 310.00L895.18 297.36M895.93 312.50L905.09 303.08M895.93 312.50L908.67 309.28M895.93 317.50L908.67 320.72M895.93 317.50L905.09 326.92M891.60 320.00L895.18 332.64M891.60 320.00L888.02 332.64M887.27 317.50L878.11 326.92M887.27 317.50L874.53 320.72M887.27 312.50L874.53 309.28M887.27 312.50L878.11 303.08" stroke="#dedede" stroke-width="1.4" stroke-dasharray="1.5 3" fill="none"/><path d="M904.80 466.20L897.90 478.15L884.10 478.15L877.20 466.20L884.10 454.25L897.90 454.25ZM904.80 466.20L910.00 463.20M897.90 478.15L903.10 481.15M884.10 478.15L884.10 484.15M877.20 466.20L872.00 469.20M884.10 454.25L878.90 451.25M897.90 454.25L897.90 448.25" stroke="#d6d6d6" stroke-width="1.4" stroke-dasharray="1.6 2.6" fill="none"/></svg>
</body></html>
